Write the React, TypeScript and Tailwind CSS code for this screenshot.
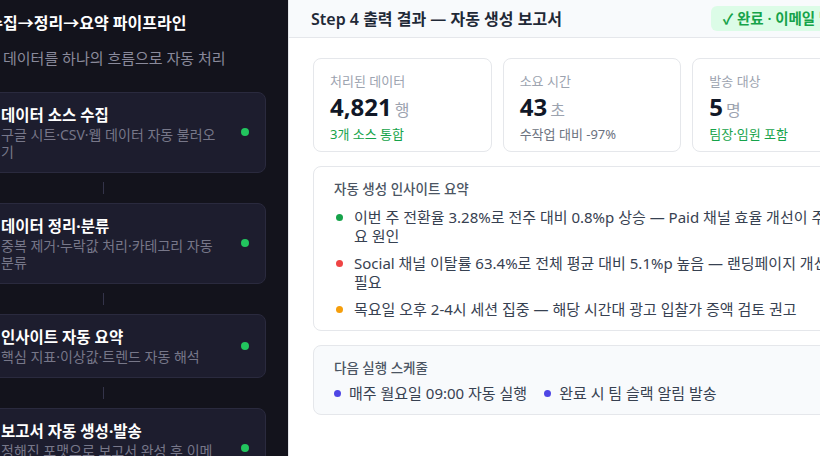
import { Check } from "lucide-react";

const STEPS = [
  { no: 1, title: "데이터 소스 수집", desc: "구글 시트·CSV·웹 데이터 자동 불러오기" },
  { no: 2, title: "데이터 정리·분류", desc: "중복 제거·누락값 처리·카테고리 자동 분류" },
  { no: 3, title: "인사이트 자동 요약", desc: "핵심 지표·이상값·트렌드 자동 해석" },
  { no: 4, title: "보고서 자동 생성·발송", desc: "정해진 포맷으로 보고서 완성 후 이메일 발송" },
];

const STATS = [
  { label: "처리된 데이터", value: "4,821", unit: "행", sub: "3개 소스 통합", subColor: "text-[#16a34a]" },
  { label: "소요 시간", value: "43", unit: "초", sub: "수작업 대비 -97%", subColor: "text-[#6b7280]" },
  { label: "발송 대상", value: "5", unit: "명", sub: "팀장·임원 포함", subColor: "text-[#16a34a]" },
];

const INSIGHTS = [
  { dot: "bg-[#16a34a]", text: "이번 주 전환율 3.28%로 전주 대비 0.8%p 상승 — Paid 채널 효율 개선이 주요 원인" },
  { dot: "bg-[#ef4444]", text: "Social 채널 이탈률 63.4%로 전체 평균 대비 5.1%p 높음 — 랜딩페이지 개선 필요" },
  { dot: "bg-[#f59e0b]", text: "목요일 오후 2-4시 세션 집중 — 해당 시간대 광고 입찰가 증액 검토 권고" },
];

function StepCard({ no, title, desc }: { no: number; title: string; desc: string }) {
  return (
    <div className="flex items-center gap-5 rounded-lg border border-[#2a2a3e] bg-[#1d1d2e] pb-3 pl-4 pr-4 pt-[11px]">
      <div className="flex min-w-0 flex-1 items-center gap-3">
        <div className="flex h-8 w-8 shrink-0 items-center justify-center rounded-full bg-[#22c55e]/15 text-[#22c55e]" title={`Step ${no}`}>
          <Check className="h-4 w-4" />
        </div>
        <div className="min-w-0 flex-1">
          <div className="text-[15.5px] font-bold leading-[22px] text-white">{title}</div>
          <div className="text-[14px] leading-[17px] text-[#777789]">{desc}</div>
        </div>
      </div>
      <span className="h-2 w-2 shrink-0 rounded-full bg-[#22c55e]" />
    </div>
  );
}

export default function App() {
  return (
    <div className="h-[456px] w-[820px] overflow-hidden bg-white font-['Noto_Sans','Noto_Sans_CJK_KR',sans-serif]">
      <div className="-ml-[84px] flex h-full w-[979px]">
        {/* pipeline */}
        <aside className="h-full w-[372px] shrink-0 bg-[#13131c] pl-6 pr-[22px] pt-3">
          <h1 className="text-[16px] font-bold leading-[22px] text-white">데이터 수집→정리→요약 파이프라인</h1>
          <p className="mt-[15px] text-[15px] leading-[18px] text-[#8a8a9b]">여러 소스 데이터를 하나의 흐름으로 자동 처리</p>

          <div className="mt-[25px] flex flex-col">
            {STEPS.map((s, i) => (
              <div key={s.no} className="flex flex-col">
                <StepCard {...s} />
                {i < STEPS.length - 1 && (
                  <div className="flex h-[30px] items-center justify-center">
                    <div className="h-3 w-px bg-[#34344a]" />
                  </div>
                )}
              </div>
            ))}
          </div>
        </aside>

        {/* output */}
        <main className="h-full w-[607px] shrink-0 border-l border-[#e5e7eb] bg-white">
          <header className="flex h-[38px] items-center justify-between border-b border-[#e5e7eb] bg-[#f8fafc] pl-[22px] pr-6">
            <h2 className="text-[16px] font-semibold text-[#1f2937]">Step 4 출력 결과 — 자동 생성 보고서</h2>
            <span className="rounded-md bg-[#dcfce7] px-3 py-[2px] text-[14.5px] font-semibold text-[#16a34a]">✓ 완료 · 이메일 발송됨</span>
          </header>

          <div className="flex flex-col gap-[14px] px-6 pt-5">
            <div className="grid grid-cols-3 gap-[11px]">
              {STATS.map((s) => (
                <div key={s.label} className="rounded-lg border border-[#e5e7eb] bg-white px-4 pb-[8px] pt-[13px]">
                  <div className="text-[13px] leading-[18px] text-[#9ca3af]">{s.label}</div>
                  <div className="mt-[3px] flex items-baseline gap-[3px] leading-[28px]">
                    <span className="text-[24px] font-bold text-[#111827]">{s.value}</span>
                    <span className="text-[16px] text-[#9ca3af]">{s.unit}</span>
                  </div>
                  <div className={`mt-px text-[13px] leading-[18px] ${s.subColor}`}>{s.sub}</div>
                </div>
              ))}
            </div>

            <section className="rounded-lg border border-[#e5e7eb] bg-white pb-[11px] pl-5 pr-[35px] pt-[13px]">
              <div className="mb-[10px] text-[13.5px] font-medium leading-[18px] text-[#4b5563]">자동 생성 인사이트 요약</div>
              <ul className="flex flex-col gap-2">
                {INSIGHTS.map((it) => (
                  <li key={it.text} className="flex items-start gap-[11px] text-[15px] leading-[19px] text-[#374151]">
                    <span className={`ml-[2px] mt-[6px] h-[7px] w-[7px] shrink-0 rounded-full ${it.dot}`} />
                    <span>{it.text}</span>
                  </li>
                ))}
              </ul>
            </section>

            <section className="rounded-lg border border-[#e5e7eb] bg-[#f8fafc] px-5 pb-[11px] pt-[13px]">
              <div className="mb-1.5 text-[13.5px] font-medium leading-[18px] text-[#4b5563]">다음 실행 스케줄</div>
              <div className="flex items-center gap-[17px] text-[15px] leading-[20px] text-[#374151]">
                <div className="flex items-center gap-2">
                  <span className="h-[7px] w-[7px] rounded-full bg-[#4f46e5]" />
                  매주 월요일 09:00 자동 실행
                </div>
                <div className="flex items-center gap-2">
                  <span className="h-[7px] w-[7px] rounded-full bg-[#4f46e5]" />
                  완료 시 팀 슬랙 알림 발송
                </div>
              </div>
            </section>
          </div>
        </main>
      </div>
    </div>
  );
}
